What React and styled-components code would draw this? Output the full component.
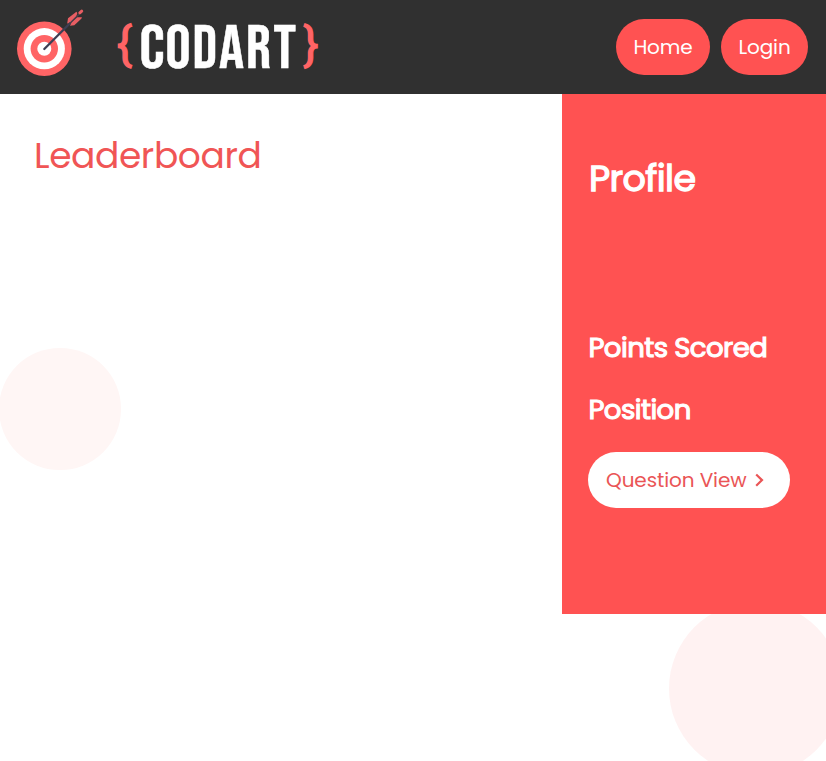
import React from "react";
import styled, { createGlobalStyle } from "styled-components";

const GlobalStyle = createGlobalStyle`
  * { box-sizing: border-box; }
  html, body { margin: 0; padding: 0; background: #fff; overflow: hidden; }
  body {
    font-family: Poppins, Inter, "Open Sans", sans-serif;
  }
  h1, h2, h3 { margin: 0; }
`;

const Page = styled.div`
  position: relative;
  height: 100vh;
  overflow: hidden;
`;

const Header = styled.header`
  position: relative;
  display: flex;
  align-items: center;
  justify-content: space-between;
  height: 94px;
  padding-right: 18px;
  background: #303030;
`;

const Brand = styled.svg`
  display: block;
  width: 330px;
  height: 94px;
`;

const Nav = styled.nav`
  display: flex;
  gap: 11px;
`;

const Pill = styled.button`
  display: flex;
  align-items: center;
  justify-content: ${(p) => (p.$light ? "flex-start" : "center")};
  width: ${(p) => p.$width}px;
  height: 56px;
  padding: ${(p) => (p.$light ? "0 0 0 18px" : "0")};
  border: 0;
  border-radius: 28px;
  font: inherit;
  font-size: 20px;
  letter-spacing: -0.1px;
  white-space: nowrap;
  color: ${(p) => (p.$light ? "#ea5556" : "#fff")};
  background: ${(p) => (p.$light ? "#fff" : "#ff5252")};
`;

const Chevron = styled.svg`
  width: 9px;
  height: 14px;
  margin-left: 9px;
`;

const Content = styled.div`
  position: relative;
  display: flex;
  height: 520px;
`;

const Board = styled.main`
  flex: 1;
  padding: 35px 0 0 34px;
`;

const BoardTitle = styled.h1`
  font-size: 36px;
  line-height: 54px;
  font-weight: 400;
  letter-spacing: -0.4px;
  color: #f05555;
`;

const Sidebar = styled.aside`
  width: 264px;
  padding: 58px 0 0 26px;
  color: #fff;
  background: #ff5252;
`;

const ProfileTitle = styled.h2`
  height: 54px;
  margin-bottom: 121px;
  padding-left: 1px;
  font-size: 36.5px;
  line-height: 54px;
  font-weight: 400;
  letter-spacing: -0.6px;
  -webkit-text-stroke: 1.3px #fff;
`;

const Stat = styled.h3`
  height: 42px;
  margin-bottom: ${(p) => p.$gap}px;
  padding-left: 0.5px;
  font-size: 27.5px;
  line-height: 42px;
  font-weight: 400;
  letter-spacing: -0.55px;
  white-space: nowrap;
  -webkit-text-stroke: 1.1px #fff;
`;

const Bubble = styled.div`
  position: absolute;
  left: ${(p) => p.$x}px;
  top: ${(p) => p.$y}px;
  width: ${(p) => p.$size}px;
  height: ${(p) => p.$size}px;
  border-radius: 50%;
  background: ${(p) => p.$color};
`;

const letters = [
  ["C", 139.5, 25],
  ["O", 165.5, 25],
  ["D", 192.5, 24.5],
  ["A", 219, 25],
  ["R", 246, 25],
  ["T", 273.5, 22.5],
];

function Logo() {
  return (
    <Brand viewBox="0 0 330 94" role="img" aria-label="Codart">
      <circle cx="44.3" cy="48.7" r="27.3" fill="#ff6465" />
      <circle cx="44.3" cy="48.7" r="20.6" fill="#fff" />
      <circle cx="44.3" cy="48.7" r="13.7" fill="#ff6465" />
      <circle cx="44.3" cy="48.7" r="7" fill="#fff" />
      <path d="M67.2 23.5 L68 18.3 L76.4 11.7 L77.3 13 L76.2 17 L70 23.3 Z" fill="#e85e63" />
      <path d="M70 25.8 L71.5 22 L77.3 17.2 L82 17.2 L81.3 18.7 L74.3 25.3 Z" fill="#e85e63" />
      <path d="M44.3 49 L70 23.2" stroke="#3d3f54" strokeWidth="2.3" strokeLinecap="round" />
      <path d="M69 24.2 L79 14.2" stroke="#4a3d4a" strokeWidth="1.4" />
      <path d="M79.8 12.8 L81.7 11.2" stroke="#e85e63" strokeWidth="3" strokeLinecap="round" />
      <g fontFamily="'Bebas Neue', Oswald, Roboto, sans-serif" fontWeight="400">
        <g fontSize="62" fill="#fff" stroke="#fff" strokeWidth="0.5">
          {letters.map(([char, x, width]) => (
            <text key={char} x={x} y="67.8" textLength={width} lengthAdjust="spacingAndGlyphs">
              {char}
            </text>
          ))}
        </g>
        <g fontSize="46" fill="#ff6465" fontFamily="Roboto, sans-serif" stroke="#ff6465" strokeWidth="1.4">
          <text x="117" y="60" textLength="15" lengthAdjust="spacingAndGlyphs">{"{"}</text>
          <text x="303.5" y="60" textLength="15" lengthAdjust="spacingAndGlyphs">{"}"}</text>
        </g>
      </g>
    </Brand>
  );
}

export default function App() {
  return (
    <Page>
      <GlobalStyle />
      <Bubble $x={-1} $y={348} $size={121.5} $color="#fff6f5" />
      <Bubble $x={668.5} $y={602} $size={173} $color="#fff2f2" />
      <Header>
        <Logo />
        <Nav>
          <Pill $width={94}>Home</Pill>
          <Pill $width={87}>Login</Pill>
        </Nav>
      </Header>
      <Content>
        <Board>
          <BoardTitle>Leaderboard</BoardTitle>
        </Board>
        <Sidebar>
          <ProfileTitle>Profile</ProfileTitle>
          <Stat $gap={20}>Points Scored</Stat>
          <Stat $gap={21}>Position</Stat>
          <Pill $light $width={202}>
            Question View
            <Chevron viewBox="0 0 9 14">
              <path d="M1.2 1.5 L7 7.1 L1.2 12.7" fill="none" stroke="#ea5556" strokeWidth="2.2" />
            </Chevron>
          </Pill>
        </Sidebar>
      </Content>
    </Page>
  );
}
